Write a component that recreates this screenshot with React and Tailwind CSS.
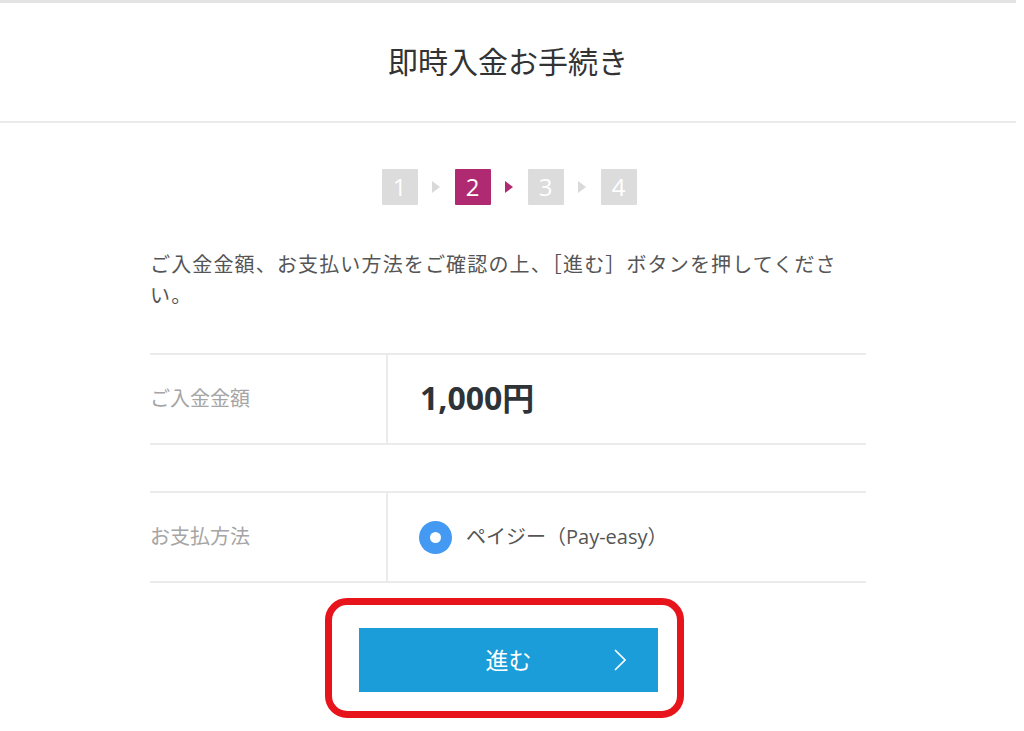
const font = { fontFamily: '"Open Sans", "Noto Sans CJK JP", sans-serif' };

function Arrow({ active }) {
  return (
    <div className="w-[37px] flex items-center justify-center">
      <svg width="8" height="12" viewBox="0 0 8 12" className="block">
        <path d="M0 0 L8 6 L0 12 Z" fill={active ? "#b02a72" : "#d9d9d9"} />
      </svg>
    </div>
  );
}

function Step({ n, active }) {
  return (
    <div
      className={
        "w-[36px] h-[36px] rounded-[1px] flex items-center justify-center text-white text-[24px] " +
        (active ? "bg-[#b02a72]" : "bg-[#dcdcdc]")
      }
    >
      {n}
    </div>
  );
}

export default function App() {
  return (
    <div className="w-[1016px] min-h-[731px] bg-white text-[#555]" style={font}>
      {/* header */}
      <div className="border-t-[3px] border-[#e3e3e3] border-b-2 border-b-[#ebebeb] h-[123px] flex items-center justify-center pb-[2px]">
        <h1 className="text-[30px] text-[#333] font-normal">即時入金お手続き</h1>
      </div>

      {/* steps */}
      <div className="mt-[46px] ml-[2px] flex justify-center">
        <Step n="1" />
        <Arrow />
        <Step n="2" active />
        <Arrow active />
        <Step n="3" />
        <Arrow />
        <Step n="4" />
      </div>

      <div className="ml-[150px] w-[716px]">
        <p className="mt-[44px] text-[20px] leading-[31px] tracking-[1.15px] text-[#555]">
          ご入金金額、お支払い方法をご確認の上、［進む］ボタンを押してください。
        </p>

        {/* amount */}
        <div className="mt-[42px] h-[92px] border-y-2 border-[#ebebeb] flex">
          <div className="w-[238px] border-r-2 border-[#ebebeb] flex items-center text-[20px] text-[#a5a5a5]">
            ご入金金額
          </div>
          <div className="flex items-center pl-[32px] pb-[3px] text-[32px] font-bold text-[#2e3338]">
            1,000円
          </div>
        </div>

        {/* payment method */}
        <div className="mt-[46px] h-[92px] border-y-2 border-[#ebebeb] flex">
          <div className="w-[238px] border-r-2 border-[#ebebeb] flex items-center text-[20px] text-[#a5a5a5]">
            お支払方法
          </div>
          <div className="flex items-center pl-[31px] gap-[14px]">
            <div className="w-[33px] h-[33px] rounded-full bg-[#4499f2] flex items-center justify-center">
              <div className="w-[11px] h-[11px] rounded-full bg-white" />
            </div>
            <span className="text-[20px] text-[#555]">ペイジー（Pay-easy）</span>
          </div>
        </div>

        {/* button with red highlight */}
        <div className="mt-[15px] ml-[175px] w-[359px] border-[7px] border-[#e8141c] rounded-[22px] pl-[27px] pr-[19px] pt-[23px] pb-[19px]">
          <button className="relative w-[299px] h-[64px] bg-[#1b9dd9] text-white text-[23px] flex items-center justify-center">
            進む
            <svg className="absolute right-[32px] top-[21px]" width="12" height="22" viewBox="0 0 12 22">
              <path d="M1 1 L11 11 L1 21" fill="none" stroke="white" strokeWidth="1.6" />
            </svg>
          </button>
        </div>
      </div>
    </div>
  );
}
